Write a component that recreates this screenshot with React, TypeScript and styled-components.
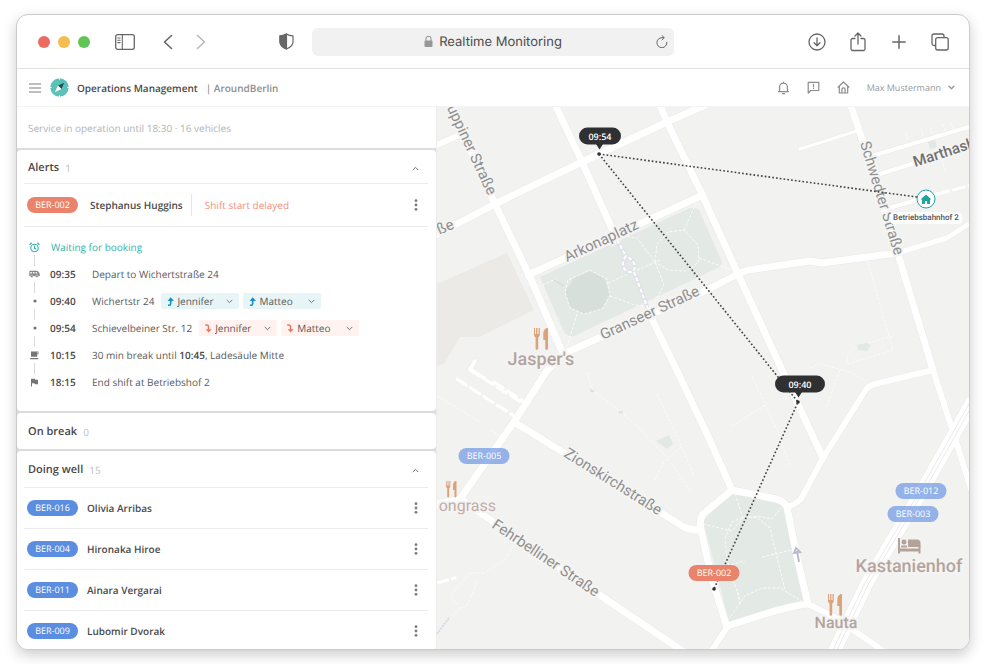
import React, { useState } from "react";
import styled, { createGlobalStyle, css } from "styled-components";

const GlobalStyle = createGlobalStyle`
  *, *::before, *::after { box-sizing: border-box; }
  body {
    margin: 0;
    background: #fff;
    color: #4a4a4a;
    font: 10px/16px "Open Sans", sans-serif;
    text-rendering: geometricPrecision;
  }
  button, input, select {
    margin: 0;
    padding: 0;
    border: 0;
    background: none;
    color: inherit;
    font: inherit;
    text-rendering: inherit;
  }
  button { cursor: pointer; }
  ul, ol { margin: 0; padding: 0; list-style: none; }
  h1, h2 { margin: 0; font: inherit; }
  svg { display: block; flex: none; }
`;

/* ---------- window ---------- */

const Desktop = styled.div`
  display: flex;
  height: 100vh;
  min-height: 480px;
  padding: 14px 16px;
`;

const Window = styled.div`
  display: flex;
  flex: 1;
  flex-direction: column;
  min-width: 0;
  overflow: hidden;
  border: 1px solid #cbcbcb;
  border-radius: 12px;
  background: #fff;
  box-shadow: 0 5px 14px rgba(0, 0, 0, 0.2);
`;

const Toolbar = styled.header`
  display: grid;
  flex: none;
  grid-template-columns: 1fr minmax(0, 362px) 1fr;
  align-items: center;
  height: 54px;
  border-bottom: 1px solid #e2e2e2;
`;

const ToolbarStart = styled.div`
  display: flex;
  align-items: center;
  padding: 0 14px 0 21px;
`;

const ToolbarEnd = styled.div`
  display: flex;
  justify-content: flex-end;
  gap: 17px;
  padding-right: 17px;
`;

const Lights = styled.div`
  display: flex;
  gap: 8px;
  margin-right: 23px;
`;

const Light = styled.button<{ $color: string }>`
  width: 12px;
  height: 12px;
  border-radius: 50%;
  background: ${(p) => p.$color};
`;

const History = styled.div`
  display: flex;
  gap: 9px;
  margin: 0 auto 0 19px;
`;

const ToolButton = styled.button<{ $muted?: boolean }>`
  display: grid;
  place-items: center;
  width: 24px;
  height: 24px;
  color: ${(p) => (p.$muted ? "#b9b9b9" : "#666")};
`;

const AddressBar = styled.div`
  display: grid;
  grid-template-columns: 24px 1fr 24px;
  align-items: center;
  height: 28px;
  border-radius: 6px;
  background: #f1f1f1;
`;

const AddressField = styled.label`
  display: flex;
  grid-column: 2;
  align-items: center;
  justify-content: center;
  gap: 6px;
`;

const AddressInput = styled.input`
  field-sizing: content;
  color: #4c4c4c;
  font: 13px/18px Inter, sans-serif;
  outline: none;
`;

/* ---------- application bar ---------- */

const AppBar = styled.div`
  display: flex;
  flex: none;
  align-items: center;
  height: 38px;
  padding: 0 14px 0 11px;
  border-bottom: 1px solid #f4f4f4;
`;

const MenuButton = styled.button`
  display: grid;
  place-items: center;
  width: 13px;
  height: 20px;
  color: #a9a9a9;
`;

const Brand = styled.div`
  display: flex;
  flex: 1;
  align-items: center;
  gap: 8px;
  padding-left: 9px;
`;

const BrandTitle = styled.h1`
  color: #4b4b4b;
  font-size: 10px;
  font-weight: 600;
`;

const BrandArea = styled.span`
  color: #8f8f8f;
  font-weight: 600;
`;

const AppActions = styled.div`
  display: flex;
  gap: 14px;
  color: #8c8c8c;
`;

const ActionButton = styled.button`
  display: grid;
  place-items: center;
  width: 16px;
  height: 16px;
`;

const UserMenu = styled.button`
  display: flex;
  align-items: center;
  gap: 7px;
  margin-left: 15px;
  color: #989898;
  font-size: 9px;
`;

/* ---------- side panel ---------- */

const Main = styled.main`
  display: flex;
  flex: 1;
  min-height: 0;
`;

const Panel = styled.div`
  display: flex;
  flex: 0 0 420px;
  flex-direction: column;
  gap: 2px;
  overflow: hidden;
  border-right: 1px solid #ececec;
  background: #dcdcdc;
`;

const ServiceNote = styled.p`
  flex: none;
  margin: 0;
  padding: 13px 11px 12px;
  background: #fff;
  color: #b4b4b4;
`;

const Card = styled.section<{ $grow?: boolean }>`
  flex: ${(p) => (p.$grow ? "1 0 auto" : "none")};
  padding: 0 8px 0 7px;
  border-radius: 4px;
  background: #fff;
`;

const CardHeader = styled.h2<{ $tall?: boolean }>`
  padding: ${(p) => (p.$tall ? "11px 0 9px" : "10px 0 7px")};
`;

const CardToggle = styled.button`
  display: flex;
  align-items: center;
  gap: 6px;
  width: 100%;
  padding: 0 9px 0 4px;
  color: #484848;
  font-size: 11px;
  font-weight: 600;
  text-align: left;

  & > svg { margin-left: auto; color: #777; }
`;

const Count = styled.span`
  color: #bfbfbf;
  font-size: 10px;
  font-weight: 400;
`;

const Row = styled.div<{ $tall?: boolean }>`
  display: flex;
  align-items: center;
  height: ${(p) => (p.$tall ? "43px" : "41px")};
  padding: 0 7px 0 3px;
  border-top: 1px solid #ececec;
`;

const badgeTones = {
  blue: css`background: #5b8ee0;`,
  red: css`background: #e9836b;`,
  faded: css`background: rgba(108, 150, 228, 0.7);`,
};

const Badge = styled.span<{ $tone: keyof typeof badgeTones }>`
  display: inline-block;
  flex: none;
  width: 51px;
  border-radius: 8px;
  color: #fff;
  font-size: 9px;
  font-weight: 500;
  line-height: 16px;
  text-align: center;
  ${(p) => badgeTones[p.$tone]}
`;

const Driver = styled.span<{ $spaced?: boolean }>`
  margin-left: ${(p) => (p.$spaced ? "12px" : "9px")};
  color: #4a4a4a;
  font-size: 10px;
  font-weight: 600;
`;

const AlertText = styled.span`
  margin-left: 8px;
  padding: 3px 0 3px 13px;
  border-left: 1px solid #e6e6e6;
  color: #f4907c;
`;

const Kebab = styled.button`
  display: grid;
  place-items: center;
  width: 10px;
  height: 20px;
  margin-left: auto;
  color: #7d7d7d;
`;

/* ---------- timeline ---------- */

const Timeline = styled.ol`
  padding: 12px 5px 21px;
  border-top: 1px solid #ececec;
`;

const Step = styled.li`
  display: grid;
  grid-template-columns: 11px 1fr;
  column-gap: 10px;
`;

const StepRail = styled.div`
  display: flex;
  flex-direction: column;
  align-items: center;
  color: #757575;

  &::after {
    content: "";
    width: 1px;
    height: 11px;
    background: #d9d9d9;
  }

  ${Step}:last-child &::after { content: none; }
`;

const StepIcon = styled.span<{ $accent?: boolean }>`
  display: grid;
  place-items: center;
  height: 16px;
  color: ${(p) => (p.$accent ? "#35b1ac" : "inherit")};
`;

const StepBody = styled.div`
  display: flex;
  height: 16px;
  white-space: pre;
`;

const Status = styled.span`
  padding-left: 1px;
  color: #35b1ac;
`;

const StepTime = styled.time`
  width: 42px;
  color: #4a4a4a;
  font-weight: 600;
`;

const StepText = styled.span`
  color: #5b5b5b;

  b { color: #4a4a4a; font-weight: 600; }
`;

const Chips = styled.div`
  display: flex;
  gap: 4px;
  margin-left: 7px;
`;

const Chip = styled.label<{ $drop?: boolean }>`
  display: flex;
  align-items: center;
  gap: 2px;
  width: 78px;
  height: 16px;
  padding: 0 6px 0 5px;
  border-radius: 2px;
  background: ${(p) => (p.$drop ? "#fff2ef" : "#e8f5f7")};
  color: #757575;
`;

const ChipSelect = styled.select`
  appearance: none;
  flex: 1;
  min-width: 0;
  height: 16px;
  color: #5b5b5b;
  outline: none;
`;

/* ---------- map ---------- */

const MapArea = styled.div`
  position: relative;
  flex: 1;
  min-width: 0;
  overflow: hidden;
  background: #f2f2f1;
`;

const MapDrawing = styled.svg`
  width: 100%;
  height: 100%;
`;

const Pin = styled.div<{ $x: number; $y: number }>`
  position: absolute;
  left: ${(p) => p.$x}px;
  top: ${(p) => p.$y}px;
  display: flex;
  transform: translate(-50%, -50%);
`;

const TimePin = styled.span<{ $wide?: boolean }>`
  width: ${(p) => (p.$wide ? "50px" : "42px")};
  border-radius: 9px;
  background: #2f3032;
  color: #fff;
  font-size: 9px;
  font-weight: 600;
  line-height: 17px;
  text-align: center;
`;

const DepotMark = styled.span`
  display: grid;
  place-items: center;
  width: 19px;
  height: 19px;
  border: 1px solid #1fa3a0;
  border-radius: 50%;
  background: #fff;
  color: #1fa3a0;
`;

const DepotLabel = styled.span`
  padding: 0 3px;
  border-radius: 4px;
  background: #fff;
  color: #555;
  font: 500 8px/12px Roboto, sans-serif;
  white-space: nowrap;
`;

/* ---------- icons ---------- */

const stroke = {
  fill: "none",
  stroke: "currentColor",
  strokeLinecap: "round" as const,
  strokeLinejoin: "round" as const,
};

const SidebarIcon = () => (
  <svg width="20" height="16" viewBox="0 0 20 16" {...stroke} strokeWidth="1.3">
    <rect x="0.7" y="0.7" width="18.6" height="14.6" rx="2" />
    <path d="M7.3 1v14M2.8 4h2.3M2.8 6.3h2.3M2.8 8.6h2.3" strokeWidth="1.1" />
  </svg>
);

const NavIcon = ({ forward = false }: { forward?: boolean }) => (
  <svg width="10" height="16" viewBox="0 0 10 16" {...stroke} strokeWidth="1.6">
    <path d={forward ? "M1.5 1.5 8.5 8l-7 6.5" : "M8.5 1.5 1.5 8l7 6.5"} />
  </svg>
);

const ShieldIcon = () => (
  <svg width="15" height="17" viewBox="0 0 15 17" {...stroke} strokeWidth="1.2">
    <path d="M7.5.9C5.6 2.2 3.5 2.7 1 2.9V9c0 3.2 2.7 5.3 6.5 7 3.8-1.700 6.500-3.800 6.500-7V2.900C11.500 2.700 9.400 2.200 7.500.9Z" />
    <path d="M7.5.9C5.6 2.2 3.5 2.7 1 2.9V9c0 3.2 2.7 5.3 6.5 7Z" fill="currentColor" />
  </svg>
);

const LockIcon = () => (
  <svg width="9" height="13" viewBox="0 0 9 13">
    <path d="M2 6V3.7a2.5 2.5 0 0 1 5 0V6" fill="none" stroke="#9a9a9a" strokeWidth="1.1" />
    <rect x="0.5" y="5.5" width="8" height="6.5" rx="1" fill="#979797" />
  </svg>
);

const ReloadIcon = () => (
  <svg width="12" height="13" viewBox="0 0 12 13" {...stroke} strokeWidth="1">
    <path d="M10.9 7.300A5 5 0 1 1 6 2.700H8M6 .6l2.200 2.100L6 4.800" />
  </svg>
);

const DownloadIcon = () => (
  <svg width="18" height="18" viewBox="0 0 18 18" {...stroke} strokeWidth="1.3">
    <circle cx="9" cy="9" r="8" />
    <path d="M9 5v7.500M6 9.700l3 3 3-3" />
  </svg>
);

const ShareIcon = () => (
  <svg width="16" height="20" viewBox="0 0 16 20" {...stroke} strokeWidth="1.3">
    <path d="M5 6.500H2.500a1.500 1.500 0 0 0-1.500 1.500v9a1.500 1.500 0 0 0 1.500 1.500h11A1.500 1.500 0 0 0 15 17V8a1.500 1.500 0 0 0-1.500-1.500H11M8 12V1.200M5 4l3-3 3 3" />
  </svg>
);

const PlusIcon = () => (
  <svg width="14" height="14" viewBox="0 0 14 14" {...stroke} strokeWidth="1.5">
    <path d="M7 .8v12.400M.8 7h12.400" />
  </svg>
);

const TabsIcon = () => (
  <svg width="18" height="18" viewBox="0 0 18 18" {...stroke} strokeWidth="1.3">
    <path d="M4.500 12.500H3A2 2 0 0 1 1 10.500V3a2 2 0 0 1 2-2h8a2 2 0 0 1 2 2v1.500" />
    <rect x="4.700" y="4.700" width="12.500" height="12.300" rx="2" />
  </svg>
);

const MenuIcon = () => (
  <svg width="12" height="10" viewBox="0 0 12 10" stroke="currentColor" strokeWidth="1.3">
    <path d="M0 1h12M0 5h12M0 9h12" />
  </svg>
);

const LogoIcon = () => (
  <svg width="19" height="19" viewBox="0 0 19 19">
    <circle cx="9.500" cy="9.500" r="9.200" fill="#5cc1b8" />
    <path d="M9.500 0v1.600M9.500 17.400V19M0 9.500h1.600M17.400 9.500H19" stroke="#fff" strokeWidth="1" />
    <path d="M14.200 4.800 8 7.600l3.400 3.400Z" fill="#22504e" />
    <path d="M4.800 14.200 8 7.600l3.400 3.400Z" fill="#fff" />
  </svg>
);

const BellIcon = () => (
  <svg width="13" height="14" viewBox="0 0 13 14" {...stroke} strokeWidth="1.2">
    <path d="M1.500 10.700h10M2.600 10.500V6a3.900 3.900 0 0 1 7.800 0v4.500M6.500 2V1M5.500 12.700h2" />
  </svg>
);

const FeedbackIcon = () => (
  <svg width="13" height="13" viewBox="0 0 13 13" {...stroke} strokeWidth="1.2">
    <path d="M1.200 12V1.300h10.600v8.200H3.800L1.200 12ZM6.500 3.400v2.200M6.500 7.200v.2" />
  </svg>
);

const HomeOutlineIcon = () => (
  <svg width="13" height="13" viewBox="0 0 13 13" {...stroke} strokeWidth="1.2">
    <path d="M1 6.200 6.500 1 12 6.200M2.300 5.300V12h8.400V5.300M4.900 12V8.500a1.600 1.600 0 0 1 3.200 0V12" />
  </svg>
);

const Chevron = ({ up = false, bold = false }: { up?: boolean; bold?: boolean }) => (
  <svg width="7" height="5" viewBox="0 0 7 5" {...stroke} strokeWidth={bold ? 1.4 : 1}>
    <path d={up ? "M1 3.800 3.500 1.300 6 3.800" : "M1 1.200 3.500 3.700 6 1.200"} />
  </svg>
);

const KebabIcon = () => (
  <svg width="4" height="12" viewBox="0 0 4 12" fill="currentColor">
    <circle cx="2" cy="1.700" r="1.400" />
    <circle cx="2" cy="6" r="1.400" />
    <circle cx="2" cy="10.300" r="1.400" />
  </svg>
);

const ClockIcon = () => (
  <svg width="11" height="11" viewBox="0 0 11 11" {...stroke} strokeWidth="1.1">
    <circle cx="5.500" cy="6" r="3.700" />
    <path d="M5.500 4v2.200l1.300.8M.8 2.500 2.500 1M10.200 2.500 8.500 1" />
  </svg>
);

const VanIcon = () => (
  <svg width="11" height="8" viewBox="0 0 11 8">
    <path d="M1.200.8h6.300c1.400 0 2.700 1.800 3.200 3.200v2H.3V1.700c0-.5.4-.9.9-.9Z" fill="#858585" />
    <path d="M1.200 1.900h1.600v1.500H1.200ZM3.900 1.900h1.600v1.500H3.900ZM6.600 1.900h1.100l1 1.500H6.600Z" fill="#fff" />
    <circle cx="2.800" cy="6.300" r="1.300" fill="#858585" stroke="#fff" strokeWidth="0.5" />
    <circle cx="8" cy="6.300" r="1.300" fill="#858585" stroke="#fff" strokeWidth="0.5" />
  </svg>
);

const StopIcon = () => (
  <svg width="4" height="4" viewBox="0 0 4 4">
    <circle cx="2" cy="2" r="1.600" fill="currentColor" />
  </svg>
);

const CupIcon = () => (
  <svg width="9" height="9" viewBox="0 0 9 9" fill="currentColor">
    <path d="M1 .5h7.500v2.800H7.200v2.500H1ZM.2 7h8v1.300h-8Z" />
    <path d="M7.200 1.300h.7v1.200h-.7Z" fill="#fff" />
  </svg>
);

const FlagIcon = () => (
  <svg width="9" height="9" viewBox="0 0 9 9" fill="currentColor">
    <path d="M1 .8h3.800l.4.900H8v4.500H4.800l-.4-.9H2V8.500H1Z" />
  </svg>
);

const BoardIcon = () => (
  <svg width="9" height="9" viewBox="0 0 9 9">
    <path d="M2 8.200h1.200c1 0 1.500-.7 1.500-1.700V3" fill="none" stroke="#1b8fc0" strokeWidth="1.6" />
    <path d="M4.700.3 8 3.900H1.500Z" fill="#1b8fc0" />
  </svg>
);

const LeaveIcon = () => (
  <svg width="9" height="9" viewBox="0 0 9 9">
    <path d="M1.200 1h1.500C3.700 1 4.500 1.600 4.500 2.600V6" fill="none" stroke="#ee7560" strokeWidth="1.5" />
    <path d="M4.600 8.600 1.700 5.200h6Z" fill="#ee7560" />
  </svg>
);

const DepotIcon = () => (
  <svg width="11" height="10" viewBox="0 0 11 10" fill="currentColor">
    <path d="M5.500 0 11 4.900H9.500V9.600H6.600V6.500H4.400v3.100H1.500V4.900H0Z" />
  </svg>
);

/* ---------- map drawing ---------- */

type RoadData = { d: string; w: number };

const roads: RoadData[] = [
  { d: "M437 145 466 132", w: 6 },
  { d: "M447 100 495 204 530 277 563 354", w: 7 },
  { d: "M430 238 495 204 582 162 667 122 710 103", w: 7 },
  { d: "M553 100 582 162 617 240", w: 7 },
  { d: "M650 315 680 377 707 434 732 490", w: 7 },
  { d: "M658 100 667 122 700 190 738 274 782 370 823 458", w: 7 },
  { d: "M528 275 703 195", w: 7 },
  { d: "M563 354 650 315 707 290 738 274 748 270 810 261 822 263 897 253", w: 7 },
  { d: "M897 253 947 238 967 225", w: 5 },
  { d: "M563 354 546 372 514 422 460 499 437 504", w: 7 },
  { d: "M514 422 684 527Q690 530 700 530", w: 7 },
  { d: "M460 499 604 598 684 652", w: 7 },
  { d: "M732 490 703 514Q699 520 701 530L712 580 727 627", w: 7 },
  { d: "M727 626 765 614Q795 605 808 604L797 557 787 507Q784 501 776 499L732 490", w: 7 },
  { d: "M787 507Q795 505 801 499L823 458 865 391Q868 386 875 384L933 370", w: 6 },
  { d: "M849 100 861 136 898 254 933 370", w: 7 },
  { d: "M933 370 953 432 972 492", w: 6 },
  { d: "M727 627 711 652", w: 6 },
  { d: "M808 604 836 618 882 650", w: 6 },
  { d: "M800 149 857 131", w: 3 },
  { d: "M875 155 972 126", w: 4 },
  { d: "M880 174 915 163", w: 4 },
  { d: "M889 208 938 194", w: 4 },
  { d: "M475 361 470 369 484 378", w: 4 },
];

const brokenRoads = [
  "M457 379 514 416",
  "M470 370 524 404",
  "M494 382 526 403",
  "M437 583 455 578",
  "M938 194 972 185",
];

const paths = [
  "M538 287 556 279",
  "M565 292 568 280 590 270 607 279 610 296 602 309 584 314 570 308Z",
  "M577 314 566 350",
  "M610 296 635 305 652 307 664 285 655 262 637 238 623 236",
  "M608 283 660 260",
  "M655 262 657 244 668 232 684 230 698 245 699 262 686 271 668 270 655 262",
  "M684 230 696 203",
  "M699 258 735 271",
  "M867 259 893 350 848 364 847 355 855 346",
  "M893 336 867 343",
  "M810 368 820 364 850 372 868 382",
  "M587 372 593 391 620 411 636 425 668 458 690 490",
  "M657 394 675 432 694 475",
  "M681 447 664 462 654 481",
  "M752 376 778 432 790 466",
  "M732 426 770 402",
  "M840 370 826 408",
  "M437 396 480 422",
  "M490 430 500 436",
  "M735 494 743 518 758 516 772 519 784 505",
  "M703 524 732 531 743 518",
  "M740 600 727 560 725 538 732 522 744 517 758 518 770 528 785 590",
  "M728 620 745 596 762 588 780 588 803 602",
  "M727 566 745 561",
  "M762 557 796 549",
  "M740 604 738 592",
  "M513 546 505 560 485 573 470 573 450 596 460 608 467 606 478 580",
  "M460 608 450 618",
  "M908 140 906 133M923 136 921 129M932 134 930 127M945 131 943 124M953 129 951 122M942 160 946 172",
];

const MapBase = () => (
  <g>
    <path d="M437 284 507 253 534 310 479 337 460 337 444 364 437 366Z" fill="#ebeae6" />
    <path d="M540 277 690 208Q697 206 700 212L722 262 720 267 574 336Q567 337 564 332Z" fill="#e3e9e5" />
    <path d="M565 292 574 278 590 271 604 278 610 294 602 309 584 314 570 307Z" fill="#d6dfda" />
    <path d="M703 520 732 494 780 502 785 510 804 603 729 622Z" fill="#e3e9e5" />
    <path d="M857 345 867 343 871 345 867 351 858 350Z" fill="#e2e8e4" />
    <path d="M656 441 669 435 673 444 667 449Z" fill="#e2e8e4" />
    <path d="M928 142 935 140 937 147 930 149Z" fill="#e2e8e4" />
    <g fill="none" stroke="#fbfbfa" strokeWidth="1" strokeDasharray="3 1.5">
      {paths.map((d) => (
        <path key={d} d={d} />
      ))}
    </g>
    <g fill="none" strokeLinejoin="round" strokeLinecap="round">
      <path d="M972 402 953 436 926 484 867 583 833 654" stroke="#e9e9e8" strokeWidth="14" />
      {roads.map((r) => (
        <path key={r.d} d={r.d} stroke="#e9e9e8" strokeWidth={r.w + 1} />
      ))}
      {brokenRoads.map((d) => (
        <path key={d} d={d} stroke="#fff" strokeWidth="3" strokeDasharray="11 5" />
      ))}
      {roads.map((r) => (
        <path key={r.d} d={r.d} stroke="#fff" strokeWidth={r.w} />
      ))}
      <path d="M972 402 953 436 926 484 867 583 833 654" stroke="#fff" strokeWidth="13" />
      <path d="M970 402 951 436 924 484 865 583 831 654" stroke="#eaeaea" strokeWidth="1" />
      <path d="M974 402 955 436 928 484 869 583 835 654" stroke="#eaeaea" strokeWidth="1" />
    </g>
    <g fill="none" stroke="#e0e0ea" strokeWidth="4">
      <path d="M617 240 626 256M634 272 648 309" />
      <path d="M626 256C620 264 624 272 630 272S638 262 626 256" />
      <path d="M617 240 626 256M634 272 648 309" stroke="#fff" strokeWidth="2" strokeDasharray="4 2" />
      <path d="M626 256C620 264 624 272 630 272S638 262 626 256" stroke="#fff" strokeWidth="2" strokeDasharray="4 2" />
    </g>
    <path d="M554 280 564 286M437 634 449 618" stroke="#d9d9e6" strokeWidth="2" strokeDasharray="2 1" />
    <path d="M590 389l4 3M590 392l4-2M619 411l4 3M619 413l4-2" stroke="#d9d9e3" strokeWidth="1" />
    <path d="M799 562 797 551M794 553 796 548 800 552Z" stroke="#b9b9cf" strokeWidth="2" fill="none" />
  </g>
);

const streetNames = [
  { text: "uppiner Straße", x: 488, y: 196, angle: 65, end: true },
  { text: "ße", x: 455, y: 228, angle: -24, end: true },
  { text: "Arkonaplatz", x: 567, y: 262, angle: -25 },
  { text: "Granseer Straße", x: 603, y: 340, angle: -25 },
  { text: "Schwedter Straße", x: 860, y: 143, angle: 73 },
  { text: "Zionskirchstraße", x: 563, y: 456, angle: 32 },
  { text: "Fehrbelliner Straße", x: 491, y: 527, angle: 34 },
  { text: "Marthash", x: 915, y: 167, angle: -18, dark: true },
];

const places = [
  { text: "Jasper's", x: 541, y: 365, size: 18 },
  { text: "Kastanienhof", x: 909, y: 572, size: 18 },
  { text: "Nauta", x: 836, y: 628, size: 16 },
];

const MapLabels = () => (
  <g fontFamily="Roboto, sans-serif" paintOrder="stroke" stroke="#f4f4f3" strokeWidth="4" strokeLinejoin="round">
    {streetNames.map((s) => (
      <text
        key={s.text}
        transform={`translate(${s.x} ${s.y}) rotate(${s.angle})`}
        fontSize="15"
        fontWeight={s.dark ? 500 : 400}
        textAnchor={s.end ? "end" : "start"}
        fill={s.dark ? "#707070" : "#8f8f8f"}
      >
        {s.text}
      </text>
    ))}
    {places.map((p) => (
      <text key={p.text} x={p.x} y={p.y} fontSize={p.size} fontWeight="500" textAnchor="middle" fill="#b5a49d">
        {p.text}
      </text>
    ))}
    <text x="496" y="511" fontSize="16" textAnchor="end" fill="#c2aca6">
      ongrass
    </text>
  </g>
);

const Cutlery = ({ x, y, scale = 1 }: { x: number; y: number; scale?: number }) => (
  <g transform={`translate(${x} ${y}) scale(${scale})`} fill="#dba27c">
    <path d="M0 0h1v6h1.100V0h1.300v6h1.100V0h1.300v6c0 2-.6 3-1.600 3.500V20.500a1.300 1.300 0 0 1-2.600 0V9.500C.5 9 0 8 0 6Z" />
    <path d="M14 0v20.500a1.300 1.300 0 0 1-2.700 0V12H9.300V6C9.300 2.500 11 0 14 0Z" />
  </g>
);

const Bed = () => (
  <g fill="#b3a298">
    <path d="M898 538h2v10.500h18.500V546h2v7.500h-2v-2H900v2h-2Z" />
    <circle cx="904" cy="542" r="2.500" />
    <path d="M908 539.500h9a3.500 3.500 0 0 1 3.500 3.500v4H908ZM901 545.500h6v2h-6Z" />
  </g>
);

const CityMap = () => (
  <MapDrawing role="img" aria-label="Map of vehicle positions">
    <g transform="translate(-437 -107)">
      <MapBase />
      <MapLabels />
      <Cutlery x={534} y={328} />
      <Cutlery x={828} y={594} />
      <Cutlery x={446} y={481} scale={0.75} />
      <Bed />
      <g fill="none" stroke="#444" strokeWidth="1.6" strokeDasharray="1.7 2.1">
        <path d="M599 154 917 197" />
        <path d="M599 154 798 402 714 589" />
      </g>
      <g fill="#2f3032">
        <circle cx="599" cy="154" r="1.800" />
        <circle cx="798" cy="402" r="1.800" />
        <circle cx="714" cy="589" r="1.800" />
        <path d="M596 144h7l-3.500 5.500ZM795 392h7l-3.500 5.500Z" />
      </g>
    </g>
  </MapDrawing>
);

/* ---------- page ---------- */

type SectionProps = {
  title: string;
  count: number;
  tall?: boolean;
  grow?: boolean;
  children?: React.ReactNode;
};

const Section = ({ title, count, tall, grow, children }: SectionProps) => {
  const [open, setOpen] = useState(true);
  return (
    <Card $grow={grow}>
      <CardHeader $tall={tall}>
        <CardToggle aria-expanded={open} onClick={() => setOpen(!open)}>
          {title}
          <Count>{count}</Count>
          {children ? <Chevron up={open} /> : null}
        </CardToggle>
      </CardHeader>
      {open ? children : null}
    </Card>
  );
};

const RowMenu = ({ name }: { name: string }) => (
  <Kebab aria-label={`More options for ${name}`}>
    <KebabIcon />
  </Kebab>
);

const Passenger = ({ name, drop }: { name: string; drop?: boolean }) => (
  <Chip $drop={drop}>
    {drop ? <LeaveIcon /> : <BoardIcon />}
    <ChipSelect aria-label={drop ? "Drop-off" : "Pick-up"} defaultValue={name}>
      <option>{name}</option>
    </ChipSelect>
    <Chevron />
  </Chip>
);

type Stop = {
  time: string;
  icon: React.ReactNode;
  text: React.ReactNode;
  passengers?: string[];
  drop?: boolean;
};

const stops: Stop[] = [
  { time: "09:35", icon: <VanIcon />, text: "Depart to Wichertstraße 24" },
  { time: "09:40", icon: <StopIcon />, text: "Wichertstr 24", passengers: ["Jennifer", "Matteo"] },
  { time: "09:54", icon: <StopIcon />, text: "Schievelbeiner Str. 12", passengers: ["Jennifer", "Matteo"], drop: true },
  {
    time: "10:15",
    icon: <CupIcon />,
    text: (
      <>
        30 min break until <b>10:45</b>, Ladesäule Mitte
      </>
    ),
  },
  { time: "18:15", icon: <FlagIcon />, text: "End shift at Betriebshof 2" },
];

const drivers = [
  { id: "BER-016", name: "Olivia Arribas" },
  { id: "BER-004", name: "Hironaka Hiroe" },
  { id: "BER-011", name: "Ainara Vergarai" },
  { id: "BER-009", name: "Lubomir Dvorak" },
];

const vehicles = [
  { id: "BER-005", x: 47, y: 349, tone: "faded" as const },
  { id: "BER-012", x: 484, y: 384, tone: "faded" as const },
  { id: "BER-003", x: 476, y: 407, tone: "faded" as const },
  { id: "BER-002", x: 277, y: 466, tone: "red" as const },
];

export default function App() {
  return (
    <Desktop>
      <GlobalStyle />
      <Window>
        <Toolbar>
          <ToolbarStart>
            <Lights>
              <Light $color="#ec6a5e" aria-label="Close" />
              <Light $color="#f4be4f" aria-label="Minimize" />
              <Light $color="#61c454" aria-label="Zoom" />
            </Lights>
            <ToolButton aria-label="Sidebar"><SidebarIcon /></ToolButton>
            <History>
              <ToolButton aria-label="Back"><NavIcon /></ToolButton>
              <ToolButton aria-label="Forward" $muted><NavIcon forward /></ToolButton>
            </History>
            <ToolButton aria-label="Privacy report"><ShieldIcon /></ToolButton>
          </ToolbarStart>
          <AddressBar>
            <AddressField>
              <LockIcon />
              <AddressInput aria-label="Address" defaultValue="Realtime Monitoring" />
            </AddressField>
            <ToolButton aria-label="Reload"><ReloadIcon /></ToolButton>
          </AddressBar>
          <ToolbarEnd>
            <ToolButton aria-label="Downloads"><DownloadIcon /></ToolButton>
            <ToolButton aria-label="Share"><ShareIcon /></ToolButton>
            <ToolButton aria-label="New tab"><PlusIcon /></ToolButton>
            <ToolButton aria-label="Tab overview"><TabsIcon /></ToolButton>
          </ToolbarEnd>
        </Toolbar>

        <AppBar>
          <MenuButton aria-label="Menu"><MenuIcon /></MenuButton>
          <Brand>
            <LogoIcon />
            <BrandTitle>Operations Management</BrandTitle>
            <BrandArea>| AroundBerlin</BrandArea>
          </Brand>
          <AppActions>
            <ActionButton aria-label="Notifications"><BellIcon /></ActionButton>
            <ActionButton aria-label="Feedback"><FeedbackIcon /></ActionButton>
            <ActionButton aria-label="Home"><HomeOutlineIcon /></ActionButton>
          </AppActions>
          <UserMenu aria-haspopup="menu">
            Max Mustermann
            <Chevron bold />
          </UserMenu>
        </AppBar>

        <Main>
          <Panel>
            <ServiceNote>Service in operation until 18:30 · 16 vehicles</ServiceNote>

            <Section title="Alerts" count={1}>
              <Row $tall>
                <Badge $tone="red">BER-002</Badge>
                <Driver $spaced>Stephanus Huggins</Driver>
                <AlertText>Shift start delayed</AlertText>
                <RowMenu name="Stephanus Huggins" />
              </Row>
              <Timeline>
                <Step>
                  <StepRail><StepIcon $accent><ClockIcon /></StepIcon></StepRail>
                  <StepBody><Status>Waiting for booking</Status></StepBody>
                </Step>
                {stops.map((stop) => (
                  <Step key={stop.time}>
                    <StepRail><StepIcon>{stop.icon}</StepIcon></StepRail>
                    <StepBody>
                      <StepTime>{stop.time}</StepTime>
                      <StepText>{stop.text}</StepText>
                      {stop.passengers ? (
                        <Chips>
                          {stop.passengers.map((name) => (
                            <Passenger key={name} name={name} drop={stop.drop} />
                          ))}
                        </Chips>
                      ) : null}
                    </StepBody>
                  </Step>
                ))}
              </Timeline>
            </Section>

            <Section title="On break" count={0} tall />

            <Section title="Doing well" count={15} tall grow>
              <ul>
                {drivers.map((d) => (
                  <li key={d.id}>
                    <Row>
                      <Badge $tone="blue">{d.id}</Badge>
                      <Driver>{d.name}</Driver>
                      <RowMenu name={d.name} />
                    </Row>
                  </li>
                ))}
              </ul>
            </Section>
          </Panel>

          <MapArea>
            <CityMap />
            <Pin $x={163} $y={29}><TimePin>09:54</TimePin></Pin>
            <Pin $x={363} $y={277}><TimePin $wide>09:40</TimePin></Pin>
            <Pin $x={489} $y={92}><DepotMark><DepotIcon /></DepotMark></Pin>
            <Pin $x={489} $y={111}><DepotLabel>Betriebsbahnhof 2</DepotLabel></Pin>
            {vehicles.map((v) => (
              <Pin key={v.id} $x={v.x} $y={v.y}><Badge $tone={v.tone}>{v.id}</Badge></Pin>
            ))}
          </MapArea>
        </Main>
      </Window>
    </Desktop>
  );
}
